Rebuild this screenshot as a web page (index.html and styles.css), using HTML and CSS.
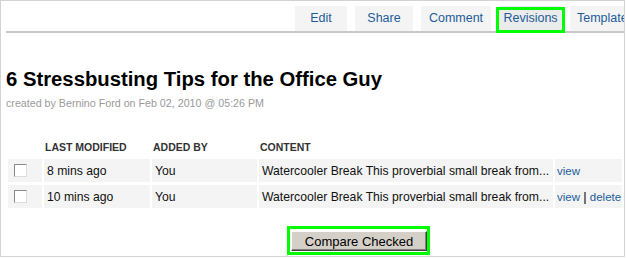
FILE: index.html
```html
<!DOCTYPE html>
<html lang="en">
<head>
    <meta charset="UTF-8">
    <meta name="viewport" content="width=device-width, initial-scale=1.0">
    <title>Revisions</title>
    <link rel="stylesheet" href="styles.css">
</head>
<body>
    <div id="frame">
        <ul class="tabs">
            <li class="tab tab-edit"><a href="#">Edit</a></li>
            <li class="tab tab-share"><a href="#">Share</a></li>
            <li class="tab tab-comment"><a href="#">Comment</a></li>
            <li class="tab tab-revisions current"><a href="#">Revisions</a><span class="mark"></span></li>
            <li class="tab tab-templates"><a href="#">Templates</a></li>
        </ul>

        <h1 class="title">6 Stressbusting Tips for the Office Guy</h1>
        <div class="meta">created by Bernino Ford on Feb 02, 2010 @ 05:26 PM</div>

        <table class="revs">
            <colgroup>
                <col class="c-check">
                <col class="c-date">
                <col class="c-user">
                <col class="c-content">
                <col class="c-actions">
            </colgroup>
            <thead>
                <tr>
                    <th></th>
                    <th>Last Modified</th>
                    <th>Added By</th>
                    <th>Content</th>
                    <th></th>
                </tr>
            </thead>
            <tbody>
                <tr>
                    <td class="check"><input type="checkbox"></td>
                    <td>8 mins ago</td>
                    <td>You</td>
                    <td>Watercooler Break This proverbial small break from...</td>
                    <td class="actions"><a href="#">view</a></td>
                </tr>
                <tr>
                    <td class="check"><input type="checkbox"></td>
                    <td>10 mins ago</td>
                    <td>You</td>
                    <td>Watercooler Break This proverbial small break from...</td>
                    <td class="actions"><a href="#">view</a> <span class="sep">|</span> <a href="#">delete</a></td>
                </tr>
            </tbody>
        </table>

        <div class="compare">
            <span class="compare-mark"><button class="btn">Compare Checked</button></span>
        </div>
    </div>
</body>
</html>
```

FILE: styles.css
```css
body {
    margin: 0;
    background-color: white;
    font-family: "Liberation Sans", Arial, sans-serif;
}

#frame {
    box-sizing: border-box;
    width: 625px;
    height: 257px;
    border: 1px solid #d3d3d3;
    padding: 5px 0 0 5px;
    overflow: hidden;
}

a {
    color: #1d5c9a;
    text-decoration: none;
}

/* tabs */

.tabs {
    list-style: none;
    margin: 0;
    padding: 0 0 0 289px;
    height: 25px;
    border-bottom: 2px solid #c9c9c9;
    display: flex;
    white-space: nowrap;
}

.tab {
    position: relative;
    flex: none;
    height: 25px;
    line-height: 25px;
    margin-right: 8px;
    background-color: #f4f4f4;
    text-align: center;
    font-size: 12.5px;
}

.tab-edit { width: 52px; }
.tab-share { width: 58px; }
.tab-comment { width: 70px; }
.tab-revisions { width: 63px; }
.tab-templates { width: 71px; }

.tab.current {
    background-color: #ebebeb;
}

.mark {
    position: absolute;
    top: 1px;
    bottom: -2px;
    left: -3px;
    right: -3px;
    border: 3px solid #00ff00;
}

/* heading */

.title {
    margin: 34px 0 0 0;
    font-size: 20.3px;
    line-height: 24px;
    font-weight: bold;
    color: black;
}

.meta {
    margin-top: 5px;
    font-size: 10.7px;
    line-height: 14px;
    color: #9a9a9a;
}

/* revisions table */

.revs {
    width: 100%;
    margin-top: 25px;
    table-layout: fixed;
    border-collapse: separate;
    border-spacing: 2px 3px;
    font-size: 12.2px;
    color: #111;
}

.c-check { width: 34px; }
.c-date { width: 106px; }
.c-user { width: 105px; }
.c-content { width: 294px; }

.revs th {
    height: 18px;
    padding: 0 1px;
    text-align: left;
    text-transform: uppercase;
    font-size: 10.5px;
    color: #333;
}

.revs td {
    height: 23px;
    padding: 0 3px;
    background-color: #f4f4f4;
    white-space: nowrap;
    overflow: hidden;
}

.revs td.check {
    padding: 0 0 0 6px;
}

.revs td.actions {
    padding-left: 2px;
    font-size: 11.5px;
}

.sep {
    color: black;
    font-size: 13px;
}

.check input {
    appearance: none;
    -webkit-appearance: none;
    display: block;
    margin: 0;
    width: 13px;
    height: 13px;
    background-color: white;
    border: 1px solid;
    border-color: #8a8a8a #dcdcdc #dcdcdc #8a8a8a;
    box-sizing: border-box;
}

/* compare button */

.compare {
    margin-top: 15px;
    padding-left: 281px;
}

.compare-mark {
    display: inline-block;
    border: 3px solid #00ff00;
    padding: 2px 0 1px 1px;
}

.btn {
    display: block;
    width: 136px;
    height: 20px;
    padding: 0;
    font-family: "Liberation Sans", Arial, sans-serif;
    font-size: 13px;
    color: black;
    background-color: #d4d0c8;
    border: 1px solid;
    border-color: #ffffff #404040 #404040 #ffffff;
    box-shadow: inset -1px -1px #808080;
    cursor: pointer;
}
```
